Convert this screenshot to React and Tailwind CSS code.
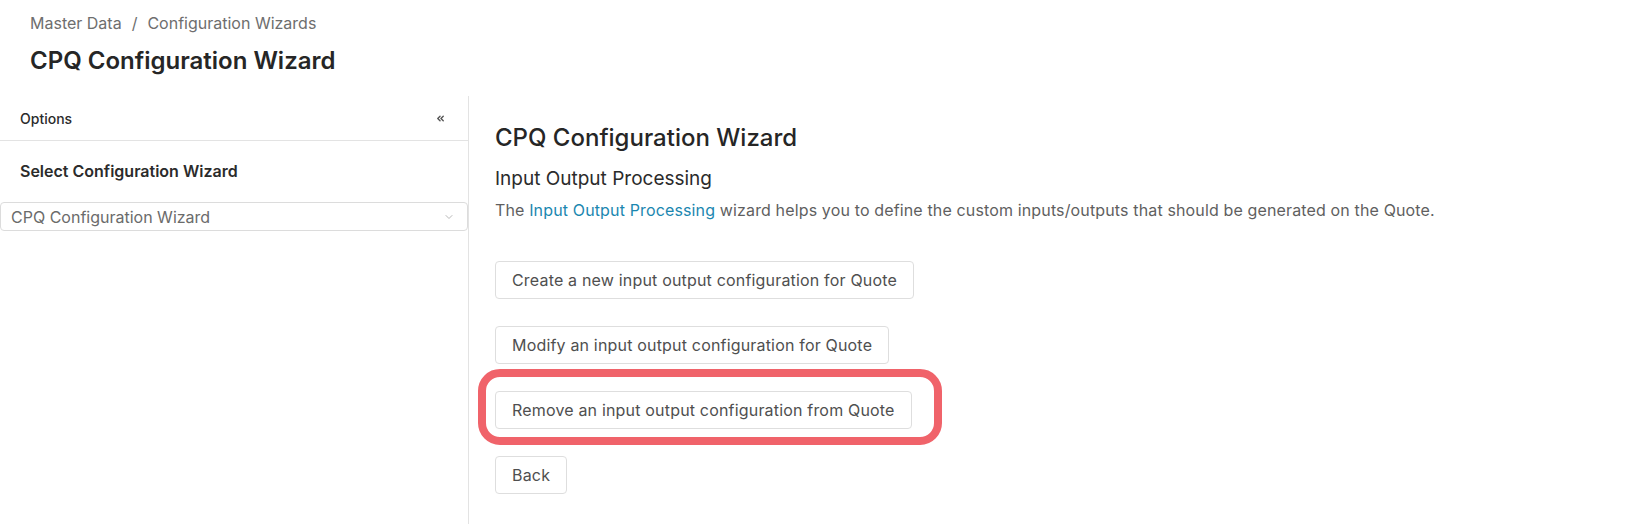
import React from "react";
import { ChevronsLeft, ChevronDown } from "lucide-react";

const actions = [
  "Create a new input output configuration for Quote",
  "Modify an input output configuration for Quote",
  "Remove an input output configuration from Quote",
];

const WizardButton = ({ label }) => (
  <button className="h-[38px] rounded-[4px] border border-[#dedede] bg-white px-[16px] text-[16px] tracking-[0.18px] text-[#4f4f4f]">
    {label}
  </button>
);

export default function App() {
  return (
    <div
      className="flex h-[524px] w-[1640px] flex-col bg-white text-[#2b2b2b]"
      style={{ fontFamily: "Inter, 'Noto Sans', sans-serif" }}
    >
      {/* page header */}
      <div className="px-[30px] pt-[12px]">
        <div className="flex items-center gap-[10px] text-[16px] leading-[22px] text-[#6e6e6e]">
          <span>Master Data</span>
          <span>/</span>
          <span>Configuration Wizards</span>
        </div>
        <h1 className="mt-[12px] text-[24px] font-semibold leading-[30px] text-[#262626]">
          CPQ Configuration Wizard
        </h1>
      </div>

      <div className="mt-[20px] flex flex-1">
        {/* options sidebar */}
        <aside className="w-[469px] shrink-0 border-r border-[#e3e3e3]">
          <div className="flex h-[45px] items-center justify-between border-b border-[#e3e3e3] pl-[20px] pr-[22px]">
            <span className="text-[14px] font-medium text-[#2b2b2b]">Options</span>
            <ChevronsLeft size={11} strokeWidth={3} className="text-[#555]" />
          </div>
          <div className="pl-[20px] pt-[20px] text-[16px] font-semibold leading-[20px] text-[#2b2b2b]">
            Select Configuration Wizard
          </div>
          <div className="mt-[21px] flex h-[29px] w-[468px] items-center justify-between rounded-[4px] border border-[#dcdcdc] pl-[10px] pr-[12px]">
            <span className="text-[16px] text-[#6b6b6b]">CPQ Configuration Wizard</span>
            <ChevronDown size={12} className="text-[#b8b8b8]" />
          </div>
        </aside>

        {/* wizard content */}
        <main className="flex-1 pl-[26px] pt-[26px]">
          <h2 className="text-[24px] font-medium leading-[32px] text-[#262626]">
            CPQ Configuration Wizard
          </h2>
          <h3 className="mt-[12px] text-[19px] leading-[26px] text-[#2b2b2b]">
            Input Output Processing
          </h3>
          <p className="mt-[6px] text-[16px] leading-[24px] tracking-[0.14px] text-[#5f5f5f]">
            The <span className="text-[#1b87b0]">Input Output Processing</span> wizard helps you to define the custom
            inputs/outputs that should be generated on the Quote.
          </p>

          <div className="mt-[39px] flex flex-col items-start gap-[27px]">
            <WizardButton label={actions[0]} />
            <WizardButton label={actions[1]} />
            <div className="relative">
              <WizardButton label={actions[2]} />
              <div className="pointer-events-none absolute left-[-17px] top-[-22px] h-[76px] w-[464px] rounded-[22px] border-[8px] border-[#f0636a]" />
            </div>
            <WizardButton label="Back" />
          </div>
        </main>
      </div>
    </div>
  );
}
